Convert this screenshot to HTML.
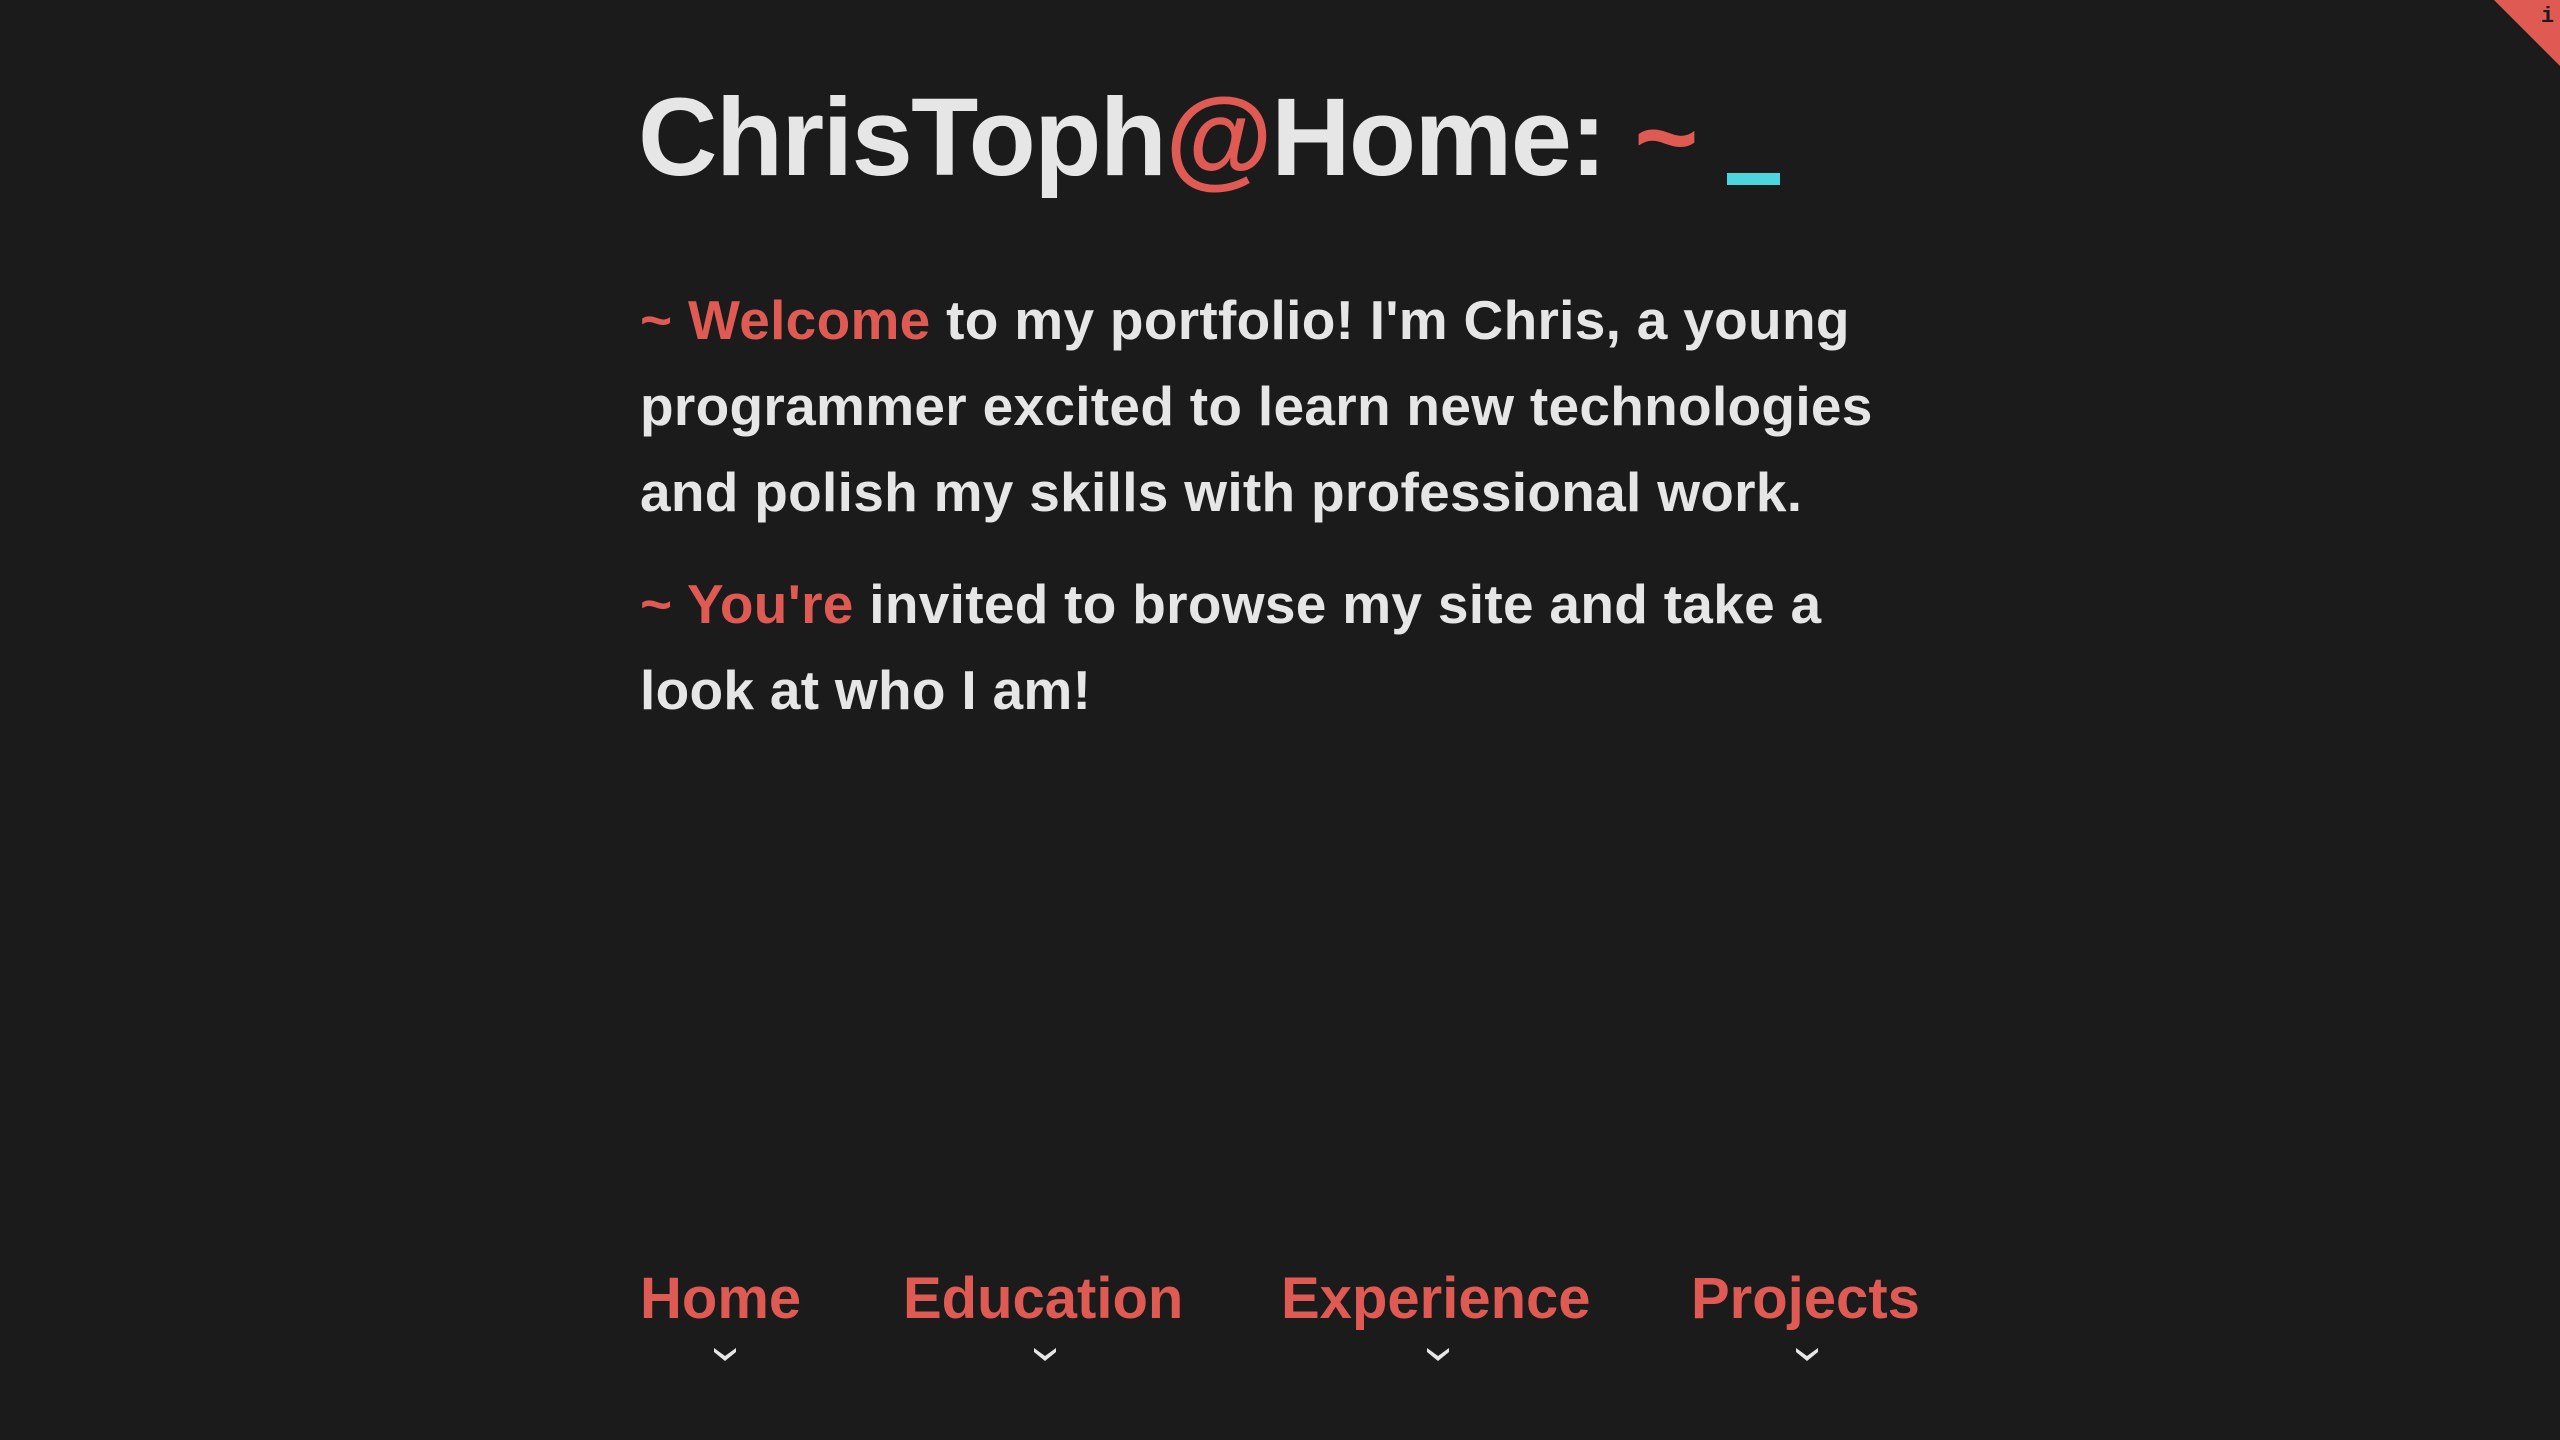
<!DOCTYPE html>
<html><head><meta charset="utf-8"><style>
html,body{margin:0;padding:0;background:#1b1b1b;width:2560px;height:1440px;overflow:hidden;position:relative;font-family:"Liberation Sans",sans-serif;color:#e6e6e7}
.t{position:absolute;left:638px;top:58px;font-size:110px;font-weight:bold;letter-spacing:-1.6px;white-space:nowrap;line-height:160px}
.r{color:#e05a54}
.cur{position:absolute;left:1727px;top:173px;width:53px;height:12px;background:#4dd4dc}
.p{position:absolute;left:640px;font-size:55px;font-weight:bold;letter-spacing:0.3px;line-height:86px;white-space:nowrap}
.nav{position:absolute;top:1265px;font-size:58px;font-weight:bold;color:#e05a54;white-space:nowrap}
.chev{position:absolute;top:1346px;width:24px;height:16px}
.tri{position:absolute;right:0;top:0;width:0;height:0;border-top:66px solid #e05a54;border-left:66px solid transparent}
.i{position:absolute;left:2541px;top:4px;font-family:"Liberation Mono",monospace;font-size:22px;font-weight:bold;color:#1b1b1b}
</style></head><body>
<div class="t">ChrisToph<span class="r">@</span>Home: <span class="r">~</span></div>
<div class="cur"></div>
<div class="p" style="top:277px"><span class="r">~ Welcome</span> to my portfolio! I'm Chris, a young<br>programmer excited to learn new technologies<br>and polish my skills with professional work.</div>
<div class="p" style="top:561px"><span class="r">~ You're</span> invited to browse my site and take a<br>look at who I am!</div>
<div class="nav" style="left:640px">Home</div>
<div class="nav" style="left:903px">Education</div>
<div class="nav" style="left:1281px">Experience</div>
<div class="nav" style="left:1691px">Projects</div>
<svg class="chev" style="left:713px" viewBox="0 0 24 16"><path d="M1 2 L12 10 L23 2 L23 6 L12 15 L1 6Z" fill="#e6e6e7"/></svg>
<svg class="chev" style="left:1033px" viewBox="0 0 24 16"><path d="M1 2 L12 10 L23 2 L23 6 L12 15 L1 6Z" fill="#e6e6e7"/></svg>
<svg class="chev" style="left:1426px" viewBox="0 0 24 16"><path d="M1 2 L12 10 L23 2 L23 6 L12 15 L1 6Z" fill="#e6e6e7"/></svg>
<svg class="chev" style="left:1795px" viewBox="0 0 24 16"><path d="M1 2 L12 10 L23 2 L23 6 L12 15 L1 6Z" fill="#e6e6e7"/></svg>
<div class="tri"></div>
<div class="i">i</div>
</body></html>
